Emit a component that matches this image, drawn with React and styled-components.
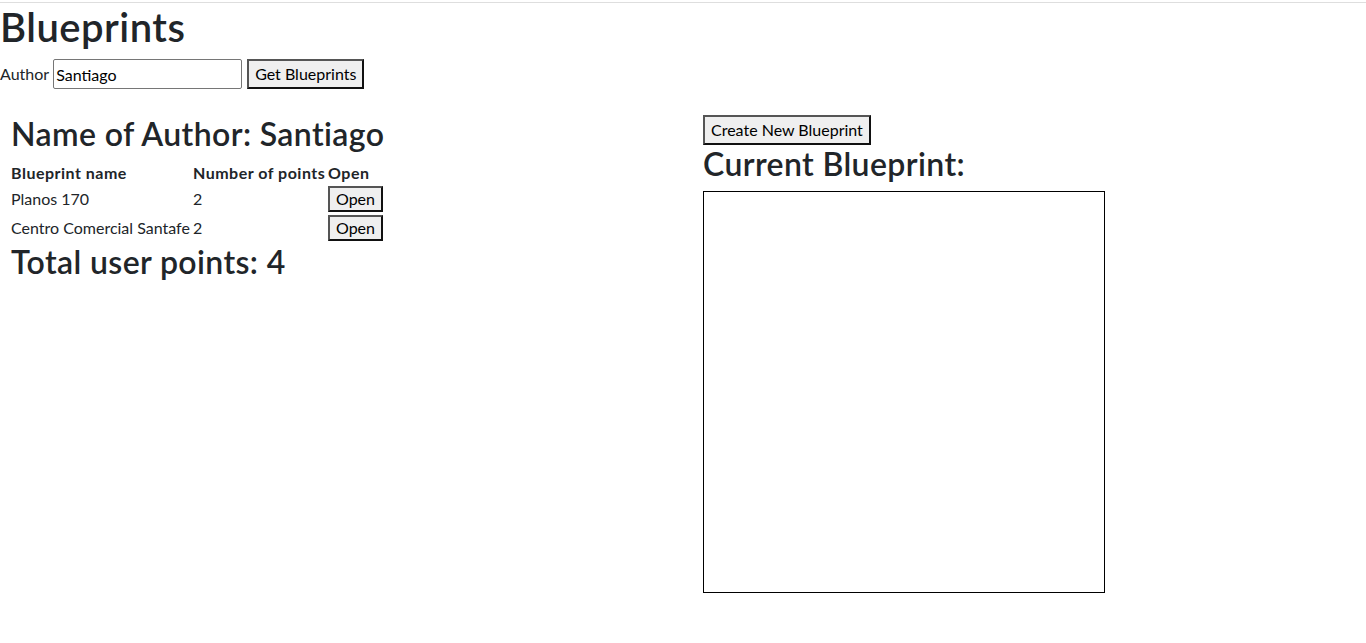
import React from "react";
import styled, { createGlobalStyle } from "styled-components";

const GlobalStyle = createGlobalStyle`
  *, *::before, *::after { box-sizing: border-box; }
  html, body { margin: 0; padding: 0; background: #fff; }
  body {
    font-family: Lato, "Liberation Sans", sans-serif;
    font-size: 16px;
    line-height: 1.5;
    color: #212529;
  }
`;

const Page = styled.div`
  margin-top: 2px;
  border-top: 1px solid #dedede;
`;

const Title = styled.h1`
  margin: 0 0 8px;
  font-size: 40px;
  font-weight: 600;
  line-height: 1.2;
  letter-spacing: 0.012em;
`;

const SearchBar = styled.form`
  display: flex;
  align-items: center;
  height: 30px;
`;

const Label = styled.label`
  margin-right: 4px;
`;

const TextInput = styled.input`
  width: 189px;
  height: 30px;
  margin: 0 5px 0 0;
  padding: 1px 2px;
  border: 1px solid #767676;
  border-radius: 2px;
  font: inherit;
  color: #000;
  background: #fff;
`;

const Button = styled.button`
  display: ${(p) => (p.$block ? "block" : "inline-block")};
  height: ${(p) => (p.$compact ? "26px" : "30px")};
  margin: 0;
  padding: 1px 6px;
  border: 2px solid;
  border-color: #555 #111 #111 #555;
  border-radius: 0;
  background: #efefef;
  color: #000;
  font: inherit;
  line-height: ${(p) => (p.$compact ? "20px" : "24px")};
  cursor: pointer;
`;

const Main = styled.div`
  display: grid;
  grid-template-columns: 703px 1fr;
  margin-top: 26px;
`;

const LeftColumn = styled.section`
  padding-left: 11px;
`;

const RightColumn = styled.section`
  display: flex;
  flex-direction: column;
  align-items: flex-start;
`;

const SectionTitle = styled.h2`
  margin: 0 0 8px;
  font-size: 32px;
  font-weight: 600;
  line-height: 1.2;
  letter-spacing: 0.012em;
`;

const Table = styled.table`
  border-collapse: collapse;
  table-layout: fixed;
  width: 372px;
`;

const HeadCell = styled.th`
  width: ${(p) => p.$w}px;
  padding: 0;
  text-align: left;
  font-weight: 700;
  height: 24px;
  white-space: nowrap;
  letter-spacing: 0.5px;
`;

const Cell = styled.td`
  padding: 1px 0 2px;
  white-space: nowrap;
  vertical-align: middle;
`;

const Canvas = styled.canvas`
  display: block;
  width: 402px;
  height: 402px;
  border: 1px solid #000;
`;

const blueprints = [
  { name: "Planos 170", points: 2 },
  { name: "Centro Comercial Santafe", points: 2 },
];

export default function App() {
  const total = blueprints.reduce((s, b) => s + b.points, 0);
  return (
    <Page>
      <GlobalStyle />
      <Title>Blueprints</Title>
      <SearchBar onSubmit={(e) => e.preventDefault()}>
        <Label htmlFor="author">Author</Label>
        <TextInput id="author" defaultValue="Santiago" />
        <Button type="button">Get Blueprints</Button>
      </SearchBar>
      <Main>
        <LeftColumn>
          <SectionTitle>Name of Author: Santiago</SectionTitle>
          <Table>
            <thead>
              <tr>
                <HeadCell $w={182}>Blueprint name</HeadCell>
                <HeadCell $w={135}>Number of points</HeadCell>
                <HeadCell $w={55}>Open</HeadCell>
              </tr>
            </thead>
            <tbody>
              {blueprints.map((b) => (
                <tr key={b.name}>
                  <Cell>{b.name}</Cell>
                  <Cell>{b.points}</Cell>
                  <Cell>
                    <Button type="button" $block $compact>
                      Open
                    </Button>
                  </Cell>
                </tr>
              ))}
            </tbody>
          </Table>
          <SectionTitle>Total user points: {total}</SectionTitle>
        </LeftColumn>
        <RightColumn>
          <Button type="button">Create New Blueprint</Button>
          <SectionTitle>Current Blueprint:</SectionTitle>
          <Canvas width={400} height={400} />
        </RightColumn>
      </Main>
    </Page>
  );
}
